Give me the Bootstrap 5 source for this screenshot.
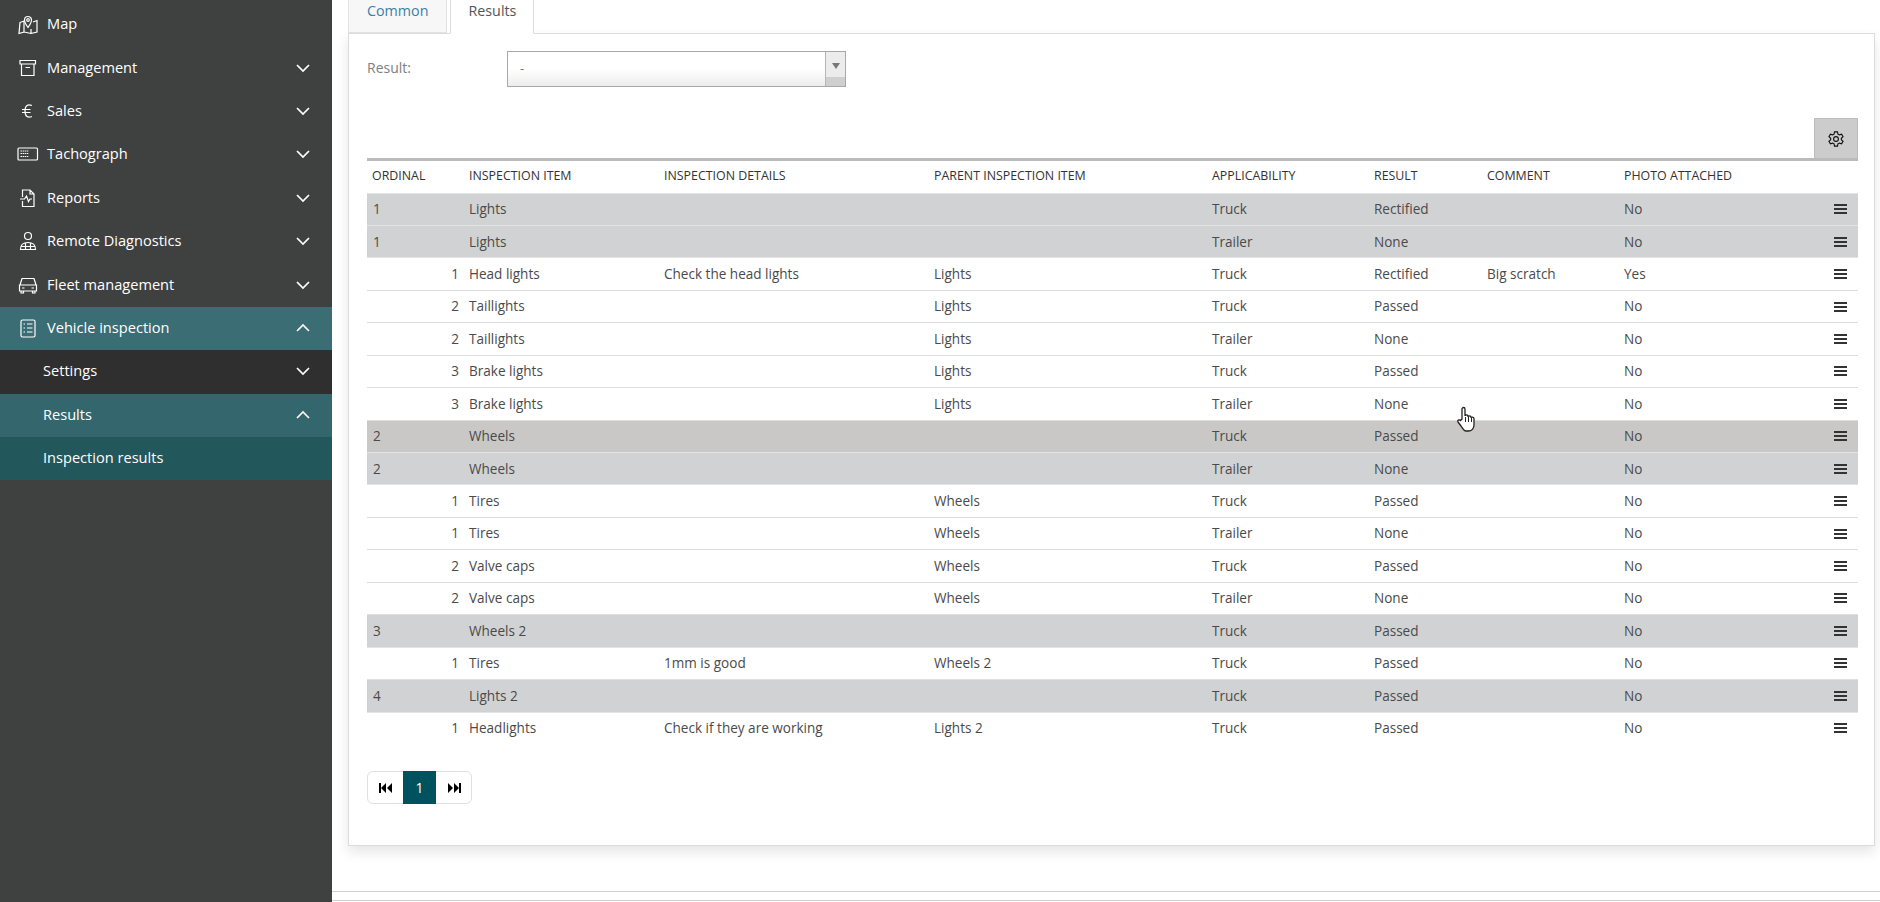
<!DOCTYPE html>
<html lang="en">
<head>
  <meta charset="UTF-8" />
  <title>Inspection results</title>
  <link rel="stylesheet" href="https://cdn.jsdelivr.net/npm/bootstrap@5.3.0/dist/css/bootstrap.min.css" />
  <style>
    html, body { height: 902px; overflow: hidden; }
    body { font-family: "Open Sans", "Liberation Sans", sans-serif; font-size: 14px; color: #4a4a4a; background: #fff; }

    /* Sidebar */
    .side-menu { width: 332px; height: 902px; background: #3f4141; padding-top: 3px; flex-shrink: 0; }
    .side-link { height: 43.4px; padding: 0 21px 1px 17px; color: #fff; font-size: 14.6px; text-decoration: none; }
    .side-link:hover { color: #fff; }
    .side-icon { width: 22px; height: 22px; margin-right: 8px; flex-shrink: 0; fill: none; stroke: #fff; stroke-width: 1.2; }
    .side-chev { width: 16px; height: 10px; margin-left: auto; fill: none; stroke: #fff; stroke-width: 1.7; }
    .side-sub { padding-left: 43px; }
    .side-active { background: #3a6d74; }
    .side-dark { background: #302f2f; }
    .side-open { background: #33676d; }
    .side-current { background: #22575c; }

    /* Main area */
    .main-area { height: 902px; }
    .tabs-wrap { padding-left: 16px; width: 1527px; }
    .nav-tabs.res-tabs { height: 33px; border-bottom: 0; gap: 3px; margin-left: 0; }
    .res-tabs .nav-link { height: 33px; padding: 0 18px; margin: 0; font-size: 14.3px; line-height: 21px; border-radius: 0; color: #3b7ea8; background: #f7f7f7; border: 1px solid #e2e2e2; border-top: 0; }
    .res-tabs .nav-link.active { color: #555; background: #fff; border-color: #dcdcdc; border-bottom-color: #fff; padding: 0 17px; height: 34px; position: relative; z-index: 1; }
    .res-panel { width: 1527px; height: 813px; margin-left: 16px; background: #fff; border: 1px solid #dcdcdc; box-shadow: 0 6px 12px rgba(0, 0, 0, .1); padding: 17px 16px 0 18px; }
    .result-label { width: 140px; color: #808080; padding-top: 6px; }
    .result-select { width: 339px; height: 36px; border: 1px solid #a8a8a8; background: linear-gradient(#fff 50%, #ececec); font-size: 13px; color: #777; padding-left: 12px; }
    .result-arrow { width: 20px; margin-left: auto; border-left: 1px solid #b5b5b5; background: linear-gradient(#ececec 75%, #cfcfcf 75%); }
    .result-arrow i { border: 4px solid transparent; border-top: 6px solid #777; border-bottom: 0; margin-top: -6px; }
    .gear-row { margin-top: 31px; height: 40px; }
    .gear-btn { width: 44px; height: 40px; background: #cccccc; border: 1px solid #bdbdbd; border-bottom: 0; }
    .gear-btn svg { width: 18px; height: 18px; fill: none; stroke: #111; stroke-width: 1.5; }

    /* Table */
    .table.res-table { width: 1491px; table-layout: fixed; margin: 0; border-top: 3px solid #bbb; font-size: 13.55px; color: #4a4a4a; }
    .res-table th { height: 33.5px; padding: 0 6px; font-size: 12.4px; font-weight: 400; color: #333; text-transform: uppercase; vertical-align: middle; border-bottom: 1px solid #e4e4e4; white-space: nowrap; }
    .res-table th:first-child { padding-left: 5px; }
    .res-table td { height: 32.45px; padding: 0 6px; vertical-align: middle; border-bottom: 1px solid #dedede; background: #fff; color: #4a4a4a; box-shadow: none; }
    .res-table tbody tr:last-child td { border-bottom: 0; }
    .res-table tr.group-row td { background: #d1d2d3; border-bottom-color: #e4e4e4; }
    .res-table tr.hover-row td { background: #c9c8c6; }
    .res-table .num-cell { text-align: right; padding-right: 4px; }
    .row-menu { display: block; width: 13px; height: 10px; margin-left: auto; margin-right: 5px; border-top: 2px solid #333; border-bottom: 2px solid #333; position: relative; }
    .row-menu::after { content: ""; position: absolute; left: 0; right: 0; top: 2px; height: 2px; background: #333; }

    /* Pager */
    .res-pager { margin-top: 27px; }
    .res-pager .page-link { width: 33px; height: 33px; padding: 0; display: flex; align-items: center; justify-content: center; color: #000; border-color: #e0e0e0; font-size: 14px; background: #fff; }
    .res-pager .page-item.active .page-link { background: #00525f; border-color: #00525f; color: #fff; }
    .res-pager svg { width: 14px; height: 10px; fill: #000; }
    .res-pager .page-item:first-child .page-link { width: 37px; }
    .res-pager .page-item:last-child .page-link { width: 37px; }

    .foot-rule { height: 1px; background: #cfcfcf; margin-top: 45px; }
    .foot-rule + .foot-rule { margin-top: 8px; }
    .hand-cursor { position: absolute; left: 1456px; top: 406px; width: 20px; height: 26px; }
  </style>
</head>
<body>
  <div class="d-flex">
    <!-- Sidebar -->
    <nav class="side-menu">
      <a href="#" class="side-link d-flex align-items-center">
        <svg class="side-icon" viewBox="0 0 22 22"><path d="M3 9.500 7 8v11l-5 1.500zM7 19l7 1.500 6-1.500V7.500l-4 1.500M7 19v-5M14 20.500V16"/><path d="M11 14.500C9 11.500 7.500 9.500 7.500 7a3.500 3.500 0 0 1 7 0c0 2.500-1.500 4.500-3.500 7.500z"/><circle cx="11" cy="7" r="1.300"/></svg>
        <span>Map</span>
      </a>
      <a href="#" class="side-link d-flex align-items-center">
        <svg class="side-icon" viewBox="0 0 22 22"><path d="M3 3.500h15.500v3.500H3zM4.500 7v11.500h12.500V7M8.500 10.500h4.500"/></svg>
        <span>Management</span>
        <svg class="side-chev" viewBox="0 0 16 10"><path d="M2 2l6 6 6-6"/></svg>
      </a>
      <a href="#" class="side-link d-flex align-items-center">
        <svg class="side-icon" viewBox="0 0 22 22"><path d="M15 5.500c-4-1.500-7-.5-7 5.500s3 7 7 5.500M5 9.500h8.500M5 12.500h8.500"/></svg>
        <span>Sales</span>
        <svg class="side-chev" viewBox="0 0 16 10"><path d="M2 2l6 6 6-6"/></svg>
      </a>
      <a href="#" class="side-link d-flex align-items-center">
        <svg class="side-icon" viewBox="0 0 22 22"><rect x="1" y="5" width="19.500" height="12" rx="1"/><path d="M3.500 8h8M3.500 10.500h8M3.500 13.500h8" stroke-dasharray="1.500 .6"/></svg>
        <span>Tachograph</span>
        <svg class="side-chev" viewBox="0 0 16 10"><path d="M2 2l6 6 6-6"/></svg>
      </a>
      <a href="#" class="side-link d-flex align-items-center">
        <svg class="side-icon" viewBox="0 0 22 22"><path d="M5.500 10V3h7.500l4 4v12.500H5.500V14M13 3v4h4M3 12h4.500l2-3 2 5.500 1.500-2.500h2"/></svg>
        <span>Reports</span>
        <svg class="side-chev" viewBox="0 0 16 10"><path d="M2 2l6 6 6-6"/></svg>
      </a>
      <a href="#" class="side-link d-flex align-items-center">
        <svg class="side-icon" viewBox="0 0 22 22"><circle cx="11" cy="6" r="3.500"/><path d="M3.500 19.500c0-5 3-7 7.500-7s7.500 2 7.500 7zM8.500 13v6.500M13.500 13v6.500M3.500 16.500h15"/></svg>
        <span>Remote Diagnostics</span>
        <svg class="side-chev" viewBox="0 0 16 10"><path d="M2 2l6 6 6-6"/></svg>
      </a>
      <a href="#" class="side-link d-flex align-items-center">
        <svg class="side-icon" viewBox="0 0 22 22"><path d="M3 11l2-6.500h12l2 6.500M2.500 11h17v6h-17zM4 17v2h2.500v-2M15.500 17v2H18v-2M5 14h2.500M14.500 14H17"/></svg>
        <span>Fleet management</span>
        <svg class="side-chev" viewBox="0 0 16 10"><path d="M2 2l6 6 6-6"/></svg>
      </a>
      <a href="#" class="side-link side-active d-flex align-items-center">
        <svg class="side-icon" viewBox="0 0 22 22"><rect x="4" y="3" width="14" height="17" rx="1.500"/><path d="M6.500 7h1.500M10 7h5.500M6.500 11h1.500M10 11h5.500M6.500 15h1.500M10 15h5.500"/></svg>
        <span>Vehicle inspection</span>
        <svg class="side-chev" viewBox="0 0 16 10"><path d="M2 8l6-6 6 6"/></svg>
      </a>
      <a href="#" class="side-link side-sub side-dark d-flex align-items-center">
        <span>Settings</span>
        <svg class="side-chev" viewBox="0 0 16 10"><path d="M2 2l6 6 6-6"/></svg>
      </a>
      <a href="#" class="side-link side-sub side-open d-flex align-items-center">
        <span>Results</span>
        <svg class="side-chev" viewBox="0 0 16 10"><path d="M2 8l6-6 6 6"/></svg>
      </a>
      <a href="#" class="side-link side-sub side-current d-flex align-items-center">
        <span>Inspection results</span>
      </a>
    </nav>

    <!-- Main -->
    <main class="main-area flex-grow-1">
      <ul class="nav nav-tabs res-tabs tabs-wrap">
        <li class="nav-item"><a class="nav-link" href="#">Common</a></li>
        <li class="nav-item"><a class="nav-link active" href="#">Results</a></li>
      </ul>
      <div class="res-panel">
        <div class="d-flex">
          <div class="result-label">Result:</div>
          <div class="result-select d-flex align-items-center">
            <span>-</span>
            <div class="result-arrow h-100 d-flex align-items-center justify-content-center"><i></i></div>
          </div>
        </div>
        <div class="gear-row d-flex justify-content-end">
          <div class="gear-btn d-flex align-items-center justify-content-center">
            <svg viewBox="0 0 24 24"><circle cx="12" cy="12" r="3.200"/><path d="M10 2.500h4l.6 3 1.900 1 2.900-1 2 3.500-2.300 2v2l2.300 2-2 3.500-2.900-1-1.900 1-.6 3h-4l-.6-3-1.900-1-2.900 1-2-3.500 2.300-2v-2l-2.300-2 2-3.500 2.900 1 1.900-1z"/></svg>
          </div>
        </div>
        <table class="table res-table">
          <colgroup id="cols"></colgroup>
          <thead>
            <tr>
              <th>Ordinal</th><th>Inspection item</th><th>Inspection details</th><th>Parent inspection item</th>
              <th>Applicability</th><th>Result</th><th>Comment</th><th>Photo attached</th><th></th>
            </tr>
          </thead>
          <tbody id="rows"></tbody>
        </table>
        <ul class="pagination res-pager">
          <li class="page-item"><a class="page-link" href="#"><svg viewBox="0 0 14 10"><path d="M0 0h2v10H0zM7 0v10L2 5zM13 0v10L8 5z"/></svg></a></li>
          <li class="page-item active"><a class="page-link" href="#">1</a></li>
          <li class="page-item"><a class="page-link" href="#"><svg viewBox="0 0 14 10"><path d="M1 0v10l5-5zM7 0v10l5-5zM12 0h2v10h-2z"/></svg></a></li>
        </ul>
      </div>
      <div class="foot-rule"></div>
      <div class="foot-rule"></div>
    </main>
  </div>

  <svg class="hand-cursor" viewBox="0 0 20 26"><path d="M6 13V3c0-2 3-2 3 0v7c0-1.500 3-1.500 3 0v1c0-1.500 3-1.500 3 0v1c0-1.500 3-1 3 .5V19c0 3-2 6-5 6h-3c-2 0-3-2-5-5l-3-4c-1-1.500 1-3 2.500-1.500z" fill="#fff" stroke="#222" stroke-width="1.300"/><path d="M9.500 11v5M12.500 11v5M15.500 12v4" stroke="#222" stroke-width="1"/></svg>

  <script>
    // column widths, in pixels
    var widths = [96, 195, 270, 278, 162, 113, 137, 180, 60];
    var cols = document.getElementById("cols");
    widths.forEach(function (w) {
      var c = document.createElement("col");
      c.style.width = w + "px";
      cols.appendChild(c);
    });

    // group flag, ordinal, item, details, parent, applicability, result, comment, photo
    var data = [
      [1, "1", "Lights", "", "", "Truck", "Rectified", "", "No"],
      [1, "1", "Lights", "", "", "Trailer", "None", "", "No"],
      [0, "1", "Head lights", "Check the head lights", "Lights", "Truck", "Rectified", "Big scratch", "Yes"],
      [0, "2", "Taillights", "", "Lights", "Truck", "Passed", "", "No"],
      [0, "2", "Taillights", "", "Lights", "Trailer", "None", "", "No"],
      [0, "3", "Brake lights", "", "Lights", "Truck", "Passed", "", "No"],
      [0, "3", "Brake lights", "", "Lights", "Trailer", "None", "", "No"],
      [2, "2", "Wheels", "", "", "Truck", "Passed", "", "No"],
      [1, "2", "Wheels", "", "", "Trailer", "None", "", "No"],
      [0, "1", "Tires", "", "Wheels", "Truck", "Passed", "", "No"],
      [0, "1", "Tires", "", "Wheels", "Trailer", "None", "", "No"],
      [0, "2", "Valve caps", "", "Wheels", "Truck", "Passed", "", "No"],
      [0, "2", "Valve caps", "", "Wheels", "Trailer", "None", "", "No"],
      [1, "3", "Wheels 2", "", "", "Truck", "Passed", "", "No"],
      [0, "1", "Tires", "1mm is good", "Wheels 2", "Truck", "Passed", "", "No"],
      [1, "4", "Lights 2", "", "", "Truck", "Passed", "", "No"],
      [0, "1", "Headlights", "Check if they are working", "Lights 2", "Truck", "Passed", "", "No"]
    ];
    var body = document.getElementById("rows");
    data.forEach(function (r) {
      var tr = document.createElement("tr");
      if (r[0]) tr.className = r[0] === 2 ? "group-row hover-row" : "group-row";
      var html = '<td class="' + (r[0] ? "" : "num-cell") + '">' + r[1] + "</td>";
      for (var i = 2; i < r.length; i++) html += "<td>" + r[i] + "</td>";
      html += '<td><span class="row-menu"></span></td>';
      tr.innerHTML = html;
      body.appendChild(tr);
    });
  </script>
</body>
</html>
